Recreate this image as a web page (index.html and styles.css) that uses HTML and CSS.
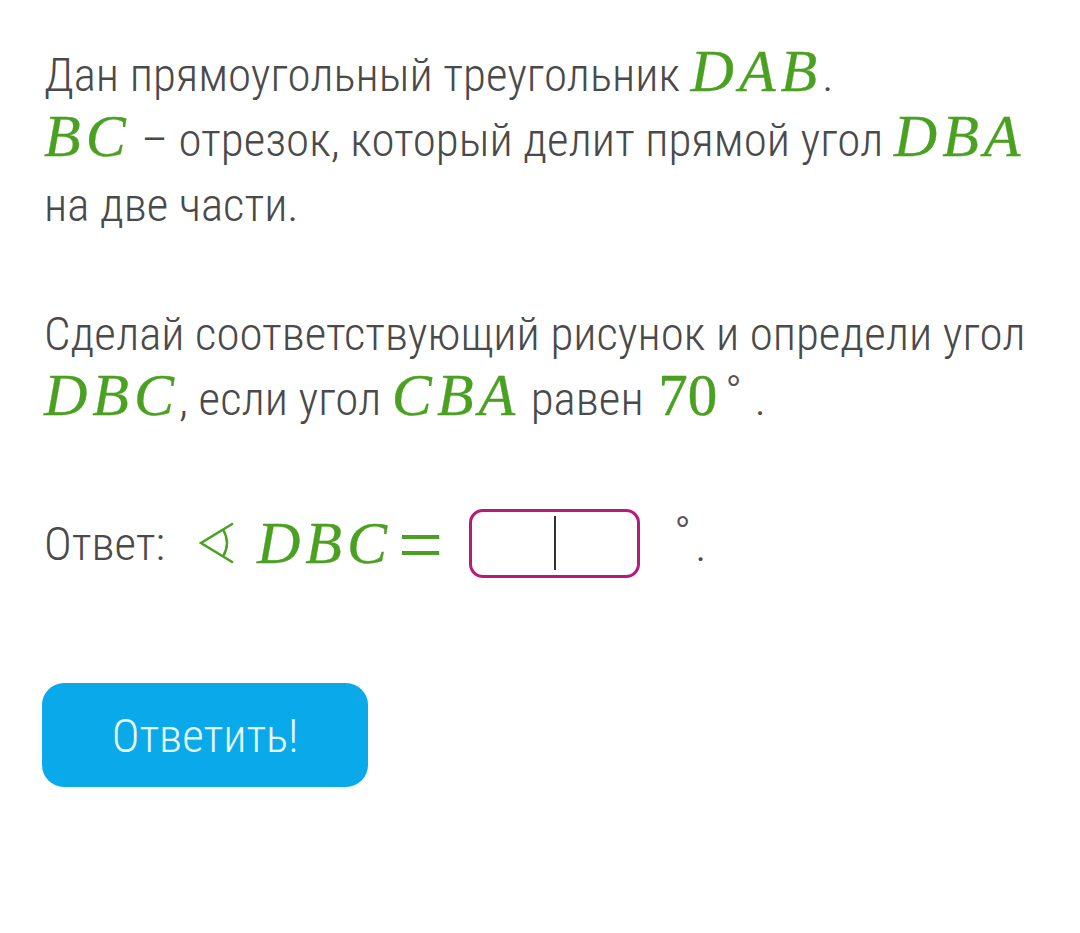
FILE: index.html
```html
<!DOCTYPE html>
<html lang="ru">
<head>
<meta charset="utf-8">
<link rel="stylesheet" href="styles.css">
</head>
<body>
<main class="task">
  <p class="para">Дан прямоугольный треугольник <span class="m">DAB</span>.<br><span class="m">BC</span> <span class="dash">–</span> отрезок, который делит прямой угол <span class="m">DBA</span><br>на две части.</p>
  <p class="para">Сделай соответствующий рисунок и определи угол<br><span class="m">DBC</span>, если угол <span class="m">CBA</span> равен <span class="num">70</span><span class="deg">∘</span> .</p>
  <div class="answer">
    <span class="label">Ответ:</span>
    <svg class="angle" width="36" height="42" viewBox="0 0 36 42" aria-hidden="true">
      <path d="M34 1.5 L2 21 L34 40.5" fill="none" stroke="#4aa020" stroke-width="2.6" stroke-linejoin="miter"/>
      <path d="M24 7.5 Q32 21 24 34.5" fill="none" stroke="#4aa020" stroke-width="2.4"/>
    </svg>
    <span class="m">DBC</span>
    <span class="eq">=</span>
    <span class="box"><span class="cursor"></span></span>
    <span class="deg2">∘</span>
    <span class="dot">.</span>
  </div>
  <button class="btn">Ответить!</button>
</main>
</body>
</html>
```
FILE: styles.css
```css
html, body {
  margin: 0;
  padding: 0;
  background: #ffffff;
}
.task {
  padding: 42px 0 0 44px;
  font-family: Roboto, "Noto Sans", sans-serif;
  font-weight: 300;
  font-stretch: condensed;
  color: #4a4a4a;
  font-size: 47px;
}
.para {
  margin: 0 0 64px 0;
  line-height: 65px;
  white-space: nowrap;
}
.m {
  font-family: "Liberation Serif", "DejaVu Serif", serif;
  font-style: italic;
  font-weight: 400;
  color: #4aa020;
  font-size: 60px;
  letter-spacing: 5px;
  line-height: 0;
  -webkit-text-stroke: 0.3px #4aa020;
}
.num {
  font-family: "Liberation Serif", serif;
  color: #4aa020;
  font-weight: 400;
  font-size: 59px;
  line-height: 0;
  margin-left: 4px;
  -webkit-text-stroke: 0.5px #4aa020;
}
.deg {
  font-family: "Liberation Serif", serif;
  font-size: 34px;
  line-height: 0;
  color: #555;
  vertical-align: 24px;
  margin-left: 6px;
}
.answer {
  display: flex;
  align-items: center;
  height: 70px;
  margin-top: 77px;
}
.label { margin-right: 34px; }
.angle {
  margin-right: 22px;
}
.answer .m { line-height: 1; }
.eq {
  font-family: "Liberation Serif", serif;
  color: #4aa020;
  font-size: 80px;
  line-height: 1;
  margin: 0 26px 0 6px;
  position: relative;
  top: 2px;
}
.box {
  box-sizing: border-box;
  width: 171px;
  height: 69px;
  border: 3px solid #b8197c;
  border-radius: 14px;
  display: flex;
  justify-content: center;
  align-items: center;
}
.cursor {
  width: 2px;
  height: 54px;
  background: #333;
}
.deg2 {
  font-family: "Liberation Serif", serif;
  font-size: 34px;
  align-self: flex-start;
  margin: -8px 0 0 32px;
  color: #555;
}
.dot { align-self: flex-end; margin: 0 0 6px 2px; }
.btn {
  display: block;
  margin-top: 105px;
  width: 326px;
  height: 104px;
  border: none;
  border-radius: 22px;
  background: #0aa9e9;
  color: #e8f8ff;
  font-family: Roboto, sans-serif;
  font-weight: 300;
  font-stretch: condensed;
  font-size: 47px;
  margin-left: -2px;
}
```
